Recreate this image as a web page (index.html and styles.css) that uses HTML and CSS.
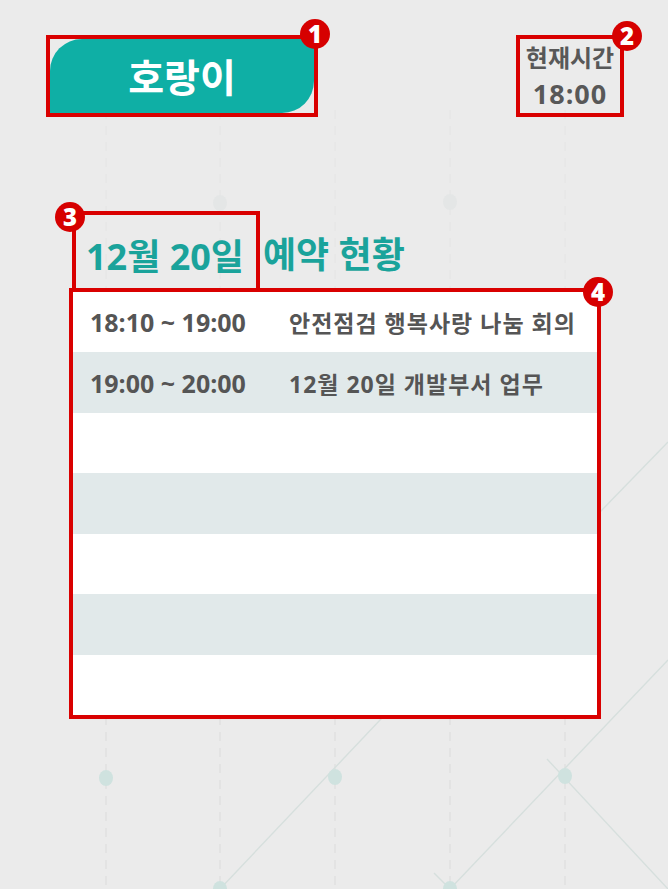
FILE: index.html
```html
<!DOCTYPE html>
<html lang="ko">
<head>
<meta charset="utf-8">
<title>호랑이 예약 현황</title>
<link rel="stylesheet" href="styles.css">
</head>
<body>
<svg class="backdrop" width="668" height="889" viewBox="0 0 668 889" aria-hidden="true">
  <g class="grid-lines">
    <line x1="106" y1="700" x2="106" y2="889"/>
    <line x1="220" y1="700" x2="220" y2="889"/>
    <line x1="335" y1="700" x2="335" y2="889"/>
    <line x1="450" y1="700" x2="450" y2="889"/>
    <line x1="565" y1="700" x2="565" y2="889"/>
  </g>
  <g class="grid-lines-faint">
    <line x1="106" y1="110" x2="106" y2="300"/>
    <line x1="220" y1="110" x2="220" y2="300"/>
    <line x1="335" y1="110" x2="335" y2="300"/>
    <line x1="450" y1="110" x2="450" y2="300"/>
    <line x1="565" y1="110" x2="565" y2="300"/>
  </g>
  <g class="diag-lines">
    <line x1="220" y1="889" x2="560" y2="530"/>
    <line x1="434" y1="873" x2="450" y2="889"/>
    <line x1="450" y1="889" x2="668" y2="660"/>
    <line x1="547" y1="759" x2="668" y2="889"/>
    <line x1="600" y1="512" x2="668" y2="442"/>
  </g>
  <g class="dots">
    <ellipse cx="106" cy="778" rx="7" ry="8"/>
    <ellipse cx="335" cy="777" rx="7" ry="8"/>
    <ellipse cx="565" cy="776" rx="7" ry="8"/>
    <ellipse cx="220" cy="889" rx="7" ry="8"/>
    <ellipse cx="450" cy="889" rx="7" ry="8"/>
  </g>
  <g class="dots-faint">
    <ellipse cx="220" cy="203" rx="7" ry="8"/>
    <ellipse cx="450" cy="202" rx="7" ry="8"/>
  </g>
</svg>

<main class="page">
  <header class="top">
    <div class="mark mark-logo">
      <div class="logo">호랑이</div>
      <span class="badge badge-1">1</span>
    </div>
    <div class="mark mark-clock">
      <div class="clock-label">현재시간</div>
      <div class="clock-time">18:00</div>
      <span class="badge badge-2">2</span>
    </div>
  </header>

  <section class="schedule">
    <h1 class="title">
      <span class="mark mark-date">12월 20일<span class="badge badge-3">3</span></span>
      <span class="title-rest">예약 현황</span>
    </h1>
    <div class="mark mark-table">
      <ul class="rows">
        <li class="row"><span class="time">18:10 ~ 19:00</span><span class="desc">안전점검 행복사랑 나눔 회의</span></li>
        <li class="row"><span class="time">19:00 ~ 20:00</span><span class="desc">12월 20일 개발부서 업무</span></li>
        <li class="row"></li>
        <li class="row"></li>
        <li class="row"></li>
        <li class="row"></li>
        <li class="row"></li>
      </ul>
      <span class="badge badge-4">4</span>
    </div>
  </section>
</main>
</body>
</html>
```

FILE: styles.css
```css
* {
  box-sizing: border-box;
}

html, body {
  margin: 0;
  padding: 0;
}

body {
  width: 668px;
  height: 889px;
  overflow: hidden;
  position: relative;
  background: #ebebeb;
  font-family: "Open Sans", "Noto Sans CJK KR", "Noto Sans", sans-serif;
  color: #555555;
}

.backdrop {
  position: absolute;
  top: 0;
  left: 0;
  z-index: 0;
}

.grid-lines line {
  stroke: #dedede;
  stroke-width: 1.2;
  stroke-dasharray: 9 7;
}

.grid-lines-faint line {
  stroke: #e4e4e4;
  stroke-width: 1;
  stroke-dasharray: 9 7;
}

.diag-lines line {
  stroke: #d6dfdd;
  stroke-width: 1.4;
}

.dots ellipse {
  fill: #cfe2df;
}

.dots-faint ellipse {
  fill: #e4e6e6;
}

.page {
  position: relative;
  z-index: 1;
}

/* annotation frames */
.mark {
  position: relative;
  border: 4px solid #d90000;
}

.badge {
  position: absolute;
  width: 30px;
  height: 30px;
  border-radius: 50%;
  background: #d60000;
  color: #ffffff;
  font-family: "Open Sans", "Noto Sans", sans-serif;
  font-weight: 800;
  font-size: 24px;
  line-height: 30px;
  text-align: center;
  letter-spacing: 0;
}

.badge-1 { top: -20px; right: -16px; }
.badge-2 { top: -18px; right: -22px; }
.badge-3 { top: -13px; left: -21px; }
.badge-4 { top: -15px; right: -16px; }

/* header */
.top {
  display: flex;
  justify-content: space-between;
  align-items: flex-start;
  padding: 35px 44px 0 46px;
}

.mark-logo {
  width: 272px;
  height: 82px;
}

.logo {
  height: 100%;
  background: #0fafa5;
  border-radius: 32px 0 32px 0;
  color: #ffffff;
  font-size: 39px;
  font-weight: 700;
  display: flex;
  align-items: center;
  justify-content: center;
  padding-bottom: 2px;
}

.mark-clock {
  width: 108px;
  height: 82px;
  display: flex;
  flex-direction: column;
  align-items: center;
  padding-top: 4px;
  color: #585858;
  font-weight: 700;
}

.clock-label {
  font-size: 24px;
  line-height: 30px;
}

.clock-time {
  margin-top: 3px;
  font-size: 27px;
  line-height: 36px;
  letter-spacing: 1px;
}

/* schedule */
.schedule {
  margin: 94px 0 0 69px;
  width: 532px;
}

.title {
  margin: 0;
  height: 77px;
  display: flex;
  align-items: stretch;
  color: #1aa39b;
  font-size: 36px;
  font-weight: 700;
}

.mark-date {
  margin-left: 3px;
  border-bottom: 0;
  display: flex;
  align-items: center;
  padding: 6px 12px 0 10px;
}

.title-rest {
  display: flex;
  align-items: center;
  padding-top: 6px;
  margin-left: 3px;
}

.mark-table {
  height: 431px;
  background: #ffffff;
}

.rows {
  list-style: none;
  margin: 0;
  padding: 0;
  height: 100%;
  display: flex;
  flex-direction: column;
}

.row {
  flex: 1;
  display: flex;
  align-items: center;
  padding-left: 17px;
  font-size: 23px;
  font-weight: 700;
  color: #555555;
}

.row:nth-child(even) {
  background: #e1e9ea;
}

.time {
  width: 199px;
  flex: none;
  font-size: 25px;
}

.desc {
  letter-spacing: 1px;
}
```
